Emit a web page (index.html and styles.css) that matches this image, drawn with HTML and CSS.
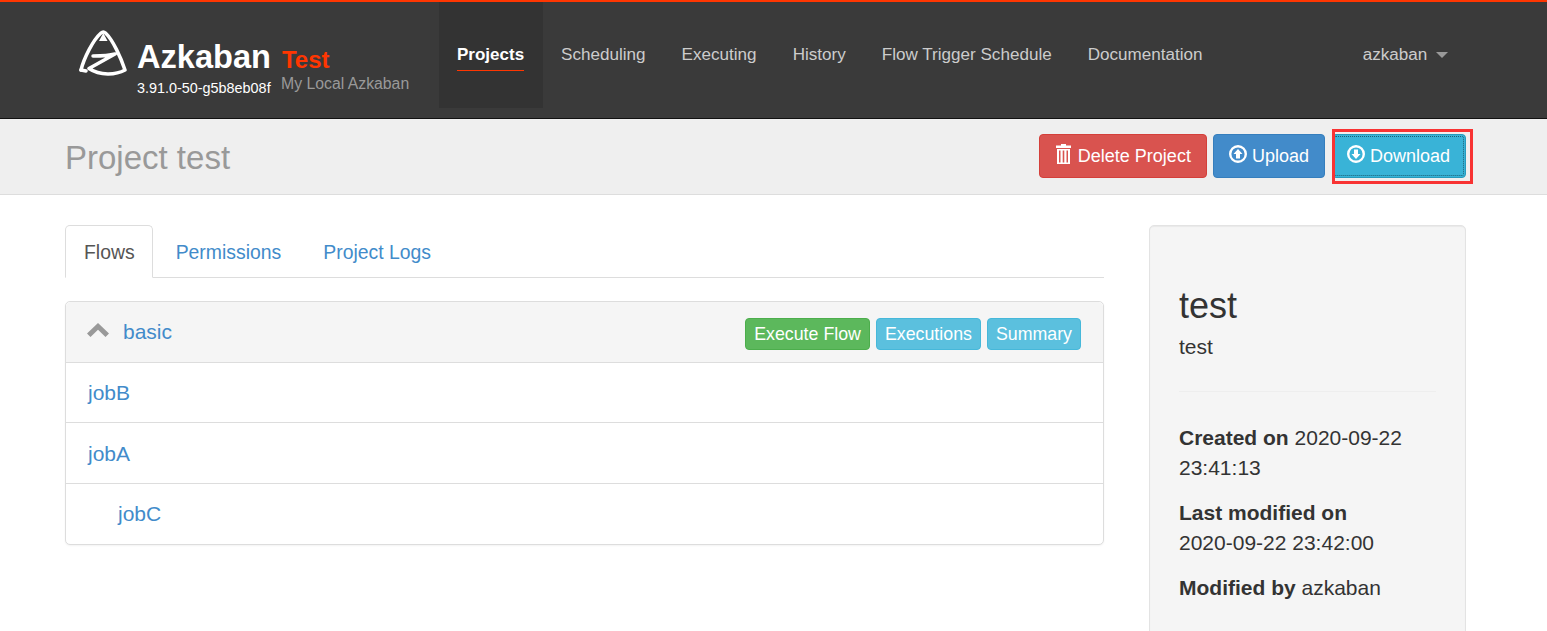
FILE: index.html
```html
<!DOCTYPE html>
<html lang="en">
<head>
  <meta charset="UTF-8">
  <title>Project test</title>
  <link rel="stylesheet" href="styles.css">
</head>
<body>
  <!-- Top navigation -->
  <div class="navbar">
    <div class="brand">
      <svg class="brand-logo" width="50" height="46" viewBox="0 0 50 46" fill="none" stroke="#fff" stroke-width="3.500" stroke-linecap="round" stroke-linejoin="round">
        <path d="M3 40 C6 28 15 10 23 3 Q25.300 1 27.500 3 C35 10 43 28 47 40 C38 45 22 46 11 38.500 L37 24 C30 26 22 26 15 26"/>
        <path d="M3 40 L8 41"/>
        <path d="M25.300 3 L21 11 L29.500 11 Z" fill="#fff" stroke="none"/>
      </svg>
      <div class="brand-main">
        <div class="brand-name">Azkaban</div>
        <div class="brand-version">3.91.0-50-g5b8eb08f</div>
      </div>
      <div class="brand-env">
        <div class="env-name">Test</div>
        <div class="env-desc">My Local Azkaban</div>
      </div>
    </div>
    <ul class="nav-list">
      <li class="nav-item active"><a href="#">Projects</a></li>
      <li class="nav-item"><a href="#">Scheduling</a></li>
      <li class="nav-item"><a href="#">Executing</a></li>
      <li class="nav-item"><a href="#">History</a></li>
      <li class="nav-item"><a href="#">Flow Trigger Schedule</a></li>
      <li class="nav-item"><a href="#">Documentation</a></li>
    </ul>
    <div class="user-menu">azkaban <span class="caret"></span></div>
  </div>

  <!-- Project header -->
  <div class="page-header">
    <h1 class="page-title">Project test</h1>
    <div class="header-actions">
      <button class="btn btn-danger">
        <svg class="icon icon-trash" width="17" height="20" viewBox="0 0 17 20" fill="#fff">
          <path d="M6 0h5v1.500h5V4H1V1.500h5z"/>
          <path fill-rule="evenodd" d="M2 5h13v15H2zM4 6.500v12h1.500v-12zM7.700 6.500v12h1.600v-12zM11.500 6.500v12H13v-12z"/>
        </svg>Delete Project
      </button>
      <button class="btn btn-primary">
        <svg class="icon" width="18" height="18" viewBox="0 0 18 18">
          <circle cx="9" cy="9" r="7.800" fill="none" stroke="#fff" stroke-width="2.400"/>
          <path d="M9 4L13.500 9H11v4.500H7V9H4.500z" fill="#fff"/>
        </svg>Upload
      </button>
      <div class="marked">
        <button class="btn btn-info">
          <svg class="icon" width="18" height="18" viewBox="0 0 18 18">
            <circle cx="9" cy="9" r="7.800" fill="none" stroke="#fff" stroke-width="2.400"/>
            <path d="M9 14L13.500 9H11V4.500H7V9H4.500z" fill="#fff"/>
          </svg>Download
        </button>
        <div class="mark-box"></div>
      </div>
    </div>
  </div>

  <div class="content">
    <div class="main-col">
      <!-- Tabs -->
      <ul class="tabs">
        <li class="tab active"><a href="#">Flows</a></li>
        <li class="tab"><a href="#">Permissions</a></li>
        <li class="tab"><a href="#">Project Logs</a></li>
      </ul>

      <!-- Flow panel -->
      <div class="panel">
        <div class="panel-heading">
          <svg class="chevron" width="22" height="14" viewBox="0 0 22 14" fill="#999">
            <path d="M11 0L22 10.500 18.500 14 11 6.800 3.500 14 0 10.500z"/>
          </svg>
          <a class="flow-name" href="#">basic</a>
          <div class="flow-actions">
            <button class="btn-small btn-success">Execute Flow</button>
            <button class="btn-small btn-light-info">Executions</button>
            <button class="btn-small btn-light-info">Summary</button>
          </div>
        </div>
        <div class="job-row"><a href="#">jobB</a></div>
        <div class="job-row"><a href="#">jobA</a></div>
        <div class="job-row nested"><a href="#">jobC</a></div>
      </div>
    </div>

    <!-- Project info -->
    <div class="side-well">
      <h3 class="side-title">test</h3>
      <p class="side-desc">test</p>
      <hr class="side-rule">
      <p class="side-info"><strong>Created on</strong> 2020-09-22 23:41:13</p>
      <p class="side-info"><strong>Last modified on</strong> <span class="date">2020-09-22 23:42:00</span></p>
      <p class="side-info"><strong>Modified by</strong> azkaban</p>
    </div>
  </div>
</body>
</html>
```

FILE: styles.css
```css
* {
  box-sizing: border-box;
}

body {
  margin: 0;
  font-family: "Liberation Sans", Arial, sans-serif;
  font-size: 21px;
  line-height: 30px;
  color: #333;
  background-color: #fff;
}

a {
  color: #428bca;
  text-decoration: none;
}

/* Top navigation */
.navbar {
  display: flex;
  height: 119px;
  padding-left: 78px;
  background-color: #3a3a3a;
  border-top: 2px solid #ff3601;
  border-bottom: 1px solid #111;
}

.brand {
  display: flex;
  width: 361px;
  padding-top: 28px;
}

.brand-logo {
  margin-right: 9px;
  filter: blur(0.4px);
}

.brand-name {
  margin-top: 8px;
  font-size: 32.6px;
  line-height: 38px;
  font-weight: bold;
  color: #fff;
}

.brand-version {
  margin-top: 4px;
  font-size: 14.4px;
  line-height: 16px;
  color: #fff;
}

.brand-env {
  margin-left: 11px;
}

.env-name {
  margin-top: 16px;
  font-size: 24px;
  line-height: 28px;
  font-weight: bold;
  color: #ff3601;
}

.env-desc {
  margin-left: -1px;
  font-size: 15.8px;
  line-height: 19px;
  color: #999;
}

.nav-list {
  display: flex;
  height: 106px;
  margin: 0;
  padding: 0;
  list-style: none;
}

.nav-item {
  padding: 0 18px;
  font-size: 17.08px;
}

.nav-item a {
  display: block;
  margin-top: 38px;
  height: 31px;
  line-height: 30px;
  color: #ccc;
}

.nav-item.active {
  padding-right: 19px;
  font-size: 17px;
  background-color: #333;
}

.nav-item.active a {
  color: #fff;
  font-weight: bold;
  border-bottom: 1px solid #ff3601;
}

.user-menu {
  margin-left: auto;
  padding: 38px 99px 0 0;
  font-size: 17.08px;
  color: #ccc;
}

.caret {
  display: inline-block;
  margin-left: 4px;
  vertical-align: middle;
  border-top: 6px solid #999;
  border-left: 6px solid transparent;
  border-right: 6px solid transparent;
}

/* Project header */
.page-header {
  display: flex;
  justify-content: space-between;
  align-items: center;
  height: 76px;
  padding: 0 81px 0 65px;
  background-color: #efefef;
  border-bottom: 1px solid #ddd;
}

.page-title {
  margin: 2px 0 0;
  font-size: 33px;
  font-weight: normal;
  color: #999;
}

.header-actions {
  display: flex;
  gap: 6px;
  margin-top: -1px;
}

.btn {
  display: flex;
  align-items: center;
  height: 44px;
  padding: 0 15px;
  font-family: inherit;
  font-size: 18px;
  color: #fff;
  border: 1px solid;
  border-radius: 4px;
}

.icon {
  margin: -4px 5px 0 0;
}

.icon-trash {
  margin-right: 6px;
}

.btn-danger {
  background-color: #d9534f;
  border-color: #d43f3a;
}

.btn-primary {
  background-color: #428bca;
  border-color: #357ebd;
}

.btn-info {
  padding-left: 14px;
  background-color: #39b3d7;
  border-color: #269abc;
  outline: 1px dotted #1b5f73;
  outline-offset: -3px;
}

/* Red rectangle drawn around the download button */
.marked {
  position: relative;
  margin-left: 1px;
}

.mark-box {
  position: absolute;
  top: -5px;
  left: 0;
  right: -7px;
  bottom: -6px;
  border: 3px solid #f83333;
}

/* Main content */
.content {
  display: flex;
  align-items: flex-start;
  padding: 30px 81px 0 65px;
}

.main-col {
  width: 1039px;
}

.tabs {
  display: flex;
  height: 53px;
  margin: 0 0 23px;
  padding: 0;
  font-size: 19.4px;
  list-style: none;
  border-bottom: 1px solid #ddd;
}

.tab {
  height: 53px;
  margin-right: 4px;
  padding: 0 18px;
  line-height: 53px;
  border: 1px solid transparent;
}

.tab.active {
  padding-right: 17px;
  background-color: #fff;
  border-color: #ddd #ddd #fff;
  border-radius: 5px 5px 0 0;
}

.tab.active a {
  color: #555;
}

.panel {
  background-color: #fff;
  border: 1px solid #ddd;
  border-radius: 5px;
  box-shadow: 0 1px 2px rgba(0, 0, 0, 0.05);
}

.panel-heading {
  display: flex;
  align-items: center;
  height: 61px;
  padding: 0 22px 0 21px;
  background-color: #f5f5f5;
  border-bottom: 1px solid #ddd;
  border-radius: 5px 5px 0 0;
}

.chevron {
  margin: -4px 14px 0 0;
}

.flow-actions {
  display: flex;
  gap: 6px;
  margin: 4px 0 0 auto;
}

.btn-small {
  height: 32px;
  padding: 0 8px;
  font-family: inherit;
  font-size: 17.8px;
  color: #fff;
  border: 1px solid;
  border-radius: 4px;
}

.btn-success {
  background-color: #5cb85c;
  border-color: #4cae4c;
}

.btn-light-info {
  background-color: #5bc0de;
  border-color: #46b8da;
}

.job-row {
  display: flex;
  align-items: center;
  height: 61px;
  padding-left: 22px;
  border-bottom: 1px solid #ddd;
}

.panel-heading + .job-row {
  height: 60px;
}

.panel-heading + .job-row + .job-row {
  padding-top: 1px;
}

.job-row:last-child {
  height: 60px;
  border-bottom: 0;
}

.job-row.nested {
  padding-left: 52px;
}

/* Project info */
.side-well {
  width: 317px;
  height: 480px;
  margin-left: 45px;
  padding: 60px 29px 0;
  background-color: #f5f5f5;
  border: 1px solid #e3e3e3;
  border-radius: 5px;
  box-shadow: inset 0 1px 1px rgba(0, 0, 0, 0.05);
}

.side-title {
  margin: 0;
  font-size: 36px;
  line-height: 40px;
  font-weight: normal;
}

.side-desc {
  margin: 6px 0 0;
}

.side-rule {
  margin: 29px 0 31px;
  border: 0;
  border-top: 1px solid #eee;
}

.side-info {
  margin: 0 0 15px;
}

.date {
  white-space: nowrap;
}
```
